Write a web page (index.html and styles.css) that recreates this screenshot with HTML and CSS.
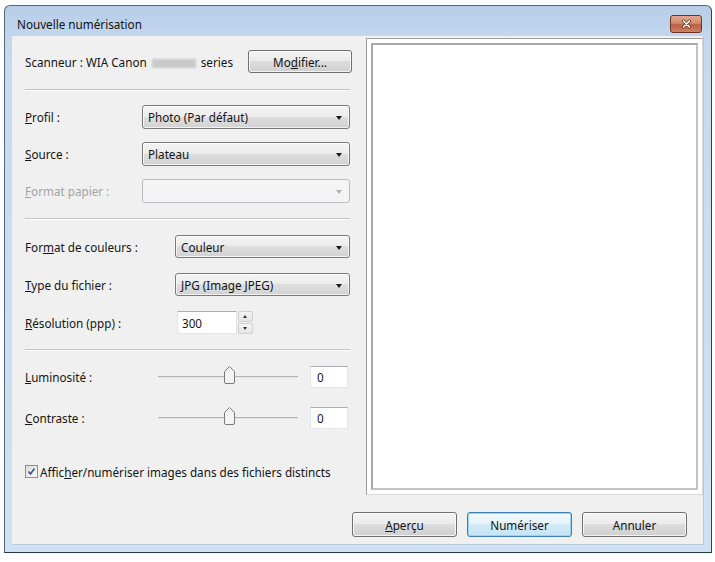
FILE: index.html
```html
<!DOCTYPE html>
<html lang="fr">
<head>
    <meta charset="utf-8">
    <title>Nouvelle numérisation</title>
    <link rel="stylesheet" href="styles.css">
</head>
<body>
<div class="window">
    <div class="titlebar">
        <span class="title">Nouvelle numérisation</span>
        <button class="close-btn" title="Fermer">
            <svg width="11" height="10" viewBox="0 0 11 10">
                <path d="M2.5 2 L8.5 8 M8.5 2 L2.5 8" stroke="#5a2a20" stroke-width="3" stroke-linecap="round"/>
                <path d="M2.5 2 L8.5 8 M8.5 2 L2.5 8" stroke="#ffffff" stroke-width="1.7" stroke-linecap="round"/>
            </svg>
        </button>
    </div>

    <div class="client">
        <div class="main">
            <div class="settings">
                <div class="scanner-row">
                    <span class="scanner-name">Scanneur : WIA Canon <span class="masked"></span> series</span>
                    <button class="btn btn-modify">Mo<u>d</u>ifier...</button>
                </div>

                <div class="sep"></div>

                <div class="group group-source">
                    <span class="lbl"><u>P</u>rofil :</span>
                    <div class="combo">Photo (Par défaut)</div>
                    <span class="lbl"><u>S</u>ource :</span>
                    <div class="combo">Plateau</div>
                    <span class="lbl disabled"><u>F</u>ormat papier :</span>
                    <div class="combo combo-disabled"></div>
                </div>

                <div class="sep"></div>

                <div class="group group-format">
                    <span class="lbl">For<u>m</u>at de couleurs :</span>
                    <div class="combo">Couleur</div>
                    <span class="lbl"><u>T</u>ype du fichier :</span>
                    <div class="combo">JPG (Image JPEG)</div>
                    <span class="lbl"><u>R</u>ésolution (ppp) :</span>
                    <div class="spin">
                        <div class="field field-res">300</div>
                        <div class="spin-btns">
                            <span class="spin-up"></span>
                            <span class="spin-down"></span>
                        </div>
                    </div>
                </div>

                <div class="sep"></div>

                <div class="group group-adjust">
                    <span class="lbl"><u>L</u>uminosité :</span>
                    <div class="slider">
                        <div class="track">
                            <svg class="thumb" width="13" height="20" viewBox="0 0 13 20">
                                <path d="M1.5 6.5 L6.5 1.5 L11.5 6.5 V17 Q11.5 18.5 10 18.5 H3 Q1.5 18.5 1.5 17 Z" fill="#f4f4f4" stroke="#7a7a7a"/>
                            </svg>
                        </div>
                        <div class="field field-val">0</div>
                    </div>
                    <span class="lbl"><u>C</u>ontraste :</span>
                    <div class="slider">
                        <div class="track">
                            <svg class="thumb" width="13" height="20" viewBox="0 0 13 20">
                                <path d="M1.5 6.5 L6.5 1.5 L11.5 6.5 V17 Q11.5 18.5 10 18.5 H3 Q1.5 18.5 1.5 17 Z" fill="#f4f4f4" stroke="#7a7a7a"/>
                            </svg>
                        </div>
                        <div class="field field-val">0</div>
                    </div>
                </div>

                <label class="check-row">
                    <span class="checkbox">
                        <svg width="9" height="9" viewBox="0 0 9 9">
                            <path d="M1.5 4.5 L3.5 7 L7.5 1.5" fill="none" stroke="#3b4f8c" stroke-width="1.6"/>
                        </svg>
                    </span>
                    <span>Affic<u>h</u>er/numériser images dans des fichiers distincts</span>
                </label>
            </div>

            <div class="preview">
                <div class="preview-inner"></div>
            </div>
        </div>

        <div class="actions">
            <button class="btn btn-action"><u>A</u>perçu</button>
            <button class="btn btn-action btn-default">Numériser</button>
            <button class="btn btn-action">Annuler</button>
        </div>
    </div>
</div>
</body>
</html>
```

FILE: styles.css
```css
body {
    margin: 0;
    background: #ffffff;
    font-family: "Noto Sans", "Open Sans", sans-serif;
    font-size: 11.7px;
    color: #141414;
}

/* window chrome */
.window {
    box-sizing: border-box;
    width: 708px;
    height: 548px;
    margin: 5px 0 0 4px;
    border: 1px solid #56677a;
    border-bottom-color: #24393d;
    border-right-color: #2c4348;
    border-radius: 6px 6px 0 0;
    background: linear-gradient(#b7cee8, #c6d9ee 40px, #d0e1f3);
    display: flex;
    flex-direction: column;
}
.titlebar {
    box-sizing: border-box;
    height: 30px;
    padding: 6px 9px 0 12px;
    display: flex;
    align-items: center;
    justify-content: space-between;
}
.title {
    color: #111;
}
.close-btn {
    width: 32px;
    height: 18px;
    padding: 0;
    border: 1px solid #6b3226;
    border-radius: 3px;
    background: linear-gradient(#e4a88f, #d08a6c 45%, #bb5e40 55%, #cc8467);
    display: flex;
    align-items: center;
    justify-content: center;
}

.client {
    flex: 1;
    margin: 0 7px 7px 7px;
    background: #f0f0f0;
    border: 1px solid #b6c8dc;
    border-width: 0 1px 1px 0;
    display: flex;
    flex-direction: column;
}

.main {
    display: flex;
    padding-top: 2px;
}

/* left column */
.settings {
    width: 325px;
    margin-left: 13px;
    padding-top: 12px;
}
.scanner-row {
    height: 23px;
    display: flex;
    align-items: center;
    justify-content: space-between;
}
.masked {
    display: inline-block;
    width: 44px;
    height: 9px;
    margin: 0 2px;
    vertical-align: -1px;
    background: #c9c9c9;
    filter: blur(1.2px);
}
.sep {
    height: 0;
    border-top: 1px solid #c4c4c4;
    border-bottom: 1px solid #ffffff;
    margin-top: 15px;
}
.scanner-row + .sep {
    margin-top: 16px;
}

.group {
    display: grid;
    align-items: center;
}
.group-source {
    grid-template-columns: 117px 208px;
    grid-auto-rows: 24px;
    row-gap: 13px;
    margin-top: 14px;
}
.group-format {
    grid-template-columns: 150px 175px;
    grid-auto-rows: 23px;
    row-gap: 15px;
    margin-top: 15px;
}
.group-adjust {
    grid-template-columns: 133px 192px;
    grid-auto-rows: 24px;
    row-gap: 17px;
    margin-top: 14px;
}

.lbl.disabled {
    color: #a3a3a3;
}

/* drop-down lists */
.combo {
    position: relative;
    box-sizing: border-box;
    height: 100%;
    padding: 0 20px 0 5px;
    display: flex;
    align-items: center;
    border: 1px solid #7a7a7a;
    border-radius: 3px;
    background: linear-gradient(#f4f4f4, #ececec 50%, #dedede 50%, #d2d2d2);
    box-shadow: inset 0 0 0 1px rgba(255, 255, 255, 0.7);
}
.combo::after {
    content: "";
    position: absolute;
    right: 7px;
    top: 50%;
    margin-top: -1px;
    border-left: 3.5px solid transparent;
    border-right: 3.5px solid transparent;
    border-top: 4px solid #1a1a1a;
}
.combo-disabled {
    border-color: #b9bdc1;
    background: #f4f4f4;
    box-shadow: none;
}
.combo-disabled::after {
    border-top-color: #b0b0b0;
}

/* text fields */
.field {
    box-sizing: border-box;
    background: #ffffff;
    border: 1px solid #e1e5ea;
    border-top-color: #abadb3;
    padding-left: 4px;
    display: flex;
    align-items: center;
}
.spin {
    display: flex;
    height: 100%;
}
.field-res {
    width: 60px;
    margin-left: 2px;
}
.spin-btns {
    width: 15px;
    margin-left: 1px;
    display: flex;
    flex-direction: column;
    gap: 1px;
}
.spin-btns span {
    flex: 1;
    position: relative;
    border: 1px solid #d0d0d0;
    border-radius: 2px;
    background: linear-gradient(#f6f6f6, #e4e4e4);
}
.spin-btns span::after {
    content: "";
    position: absolute;
    left: 50%;
    top: 50%;
    margin: -2px 0 0 -2.5px;
    border-left: 2.5px solid transparent;
    border-right: 2.5px solid transparent;
}
.spin-up::after {
    border-bottom: 3px solid #333;
}
.spin-down::after {
    border-top: 3px solid #333;
}

/* trackbars */
.slider {
    display: flex;
    align-items: center;
    height: 100%;
}
.track {
    position: relative;
    width: 140px;
    height: 0;
    border-top: 1px solid #b4b4b4;
    border-bottom: 1px solid #e4e4e4;
}
.thumb {
    position: absolute;
    left: 65px;
    top: -12px;
}
.field-val {
    width: 38px;
    height: 22px;
    margin-left: 12px;
    padding-left: 6px;
}

/* check box */
.check-row {
    display: flex;
    align-items: center;
    gap: 2px;
    margin-top: 35px;
    height: 13px;
}
.checkbox {
    box-sizing: border-box;
    width: 13px;
    height: 13px;
    border: 1px solid #8e8f8f;
    background: linear-gradient(135deg, #dcdcdc, #fbfbfb);
    display: flex;
    align-items: center;
    justify-content: center;
}

/* preview pane */
.preview {
    box-sizing: border-box;
    width: 337px;
    height: 457px;
    margin-left: 16px;
    padding: 4px;
    background: #ffffff;
    border: 1px solid #9c9c9c;
    border-right-color: #d8d8d8;
    border-bottom-color: #d8d8d8;
}
.preview-inner {
    box-sizing: border-box;
    height: 100%;
    border: 2px solid #a9a9a9;
    border-right-color: #c4c4c4;
    border-bottom-color: #c4c4c4;
}

/* push buttons */
.btn {
    font-family: inherit;
    font-size: inherit;
    color: #141414;
    border: 1px solid #707070;
    border-radius: 3px;
    background: linear-gradient(#f3f3f3, #ebebeb 50%, #dddddd 50%, #cfcfcf);
    box-shadow: inset 0 0 0 1px rgba(255, 255, 255, 0.75);
    padding: 0;
}
.btn-modify {
    width: 104px;
    height: 23px;
    margin-right: -2px;
}
.actions {
    display: flex;
    justify-content: flex-end;
    gap: 10px;
    padding: 17px 16px 0 0;
}
.btn-action {
    width: 105px;
    height: 25px;
}
.btn-default {
    border-color: #3c7fb1;
    background: linear-gradient(#f2f9fd, #e4f3fb 50%, #d3ebf8 50%, #c6e4f5);
    box-shadow: inset 0 0 0 1px #9ed3f0;
}
```
